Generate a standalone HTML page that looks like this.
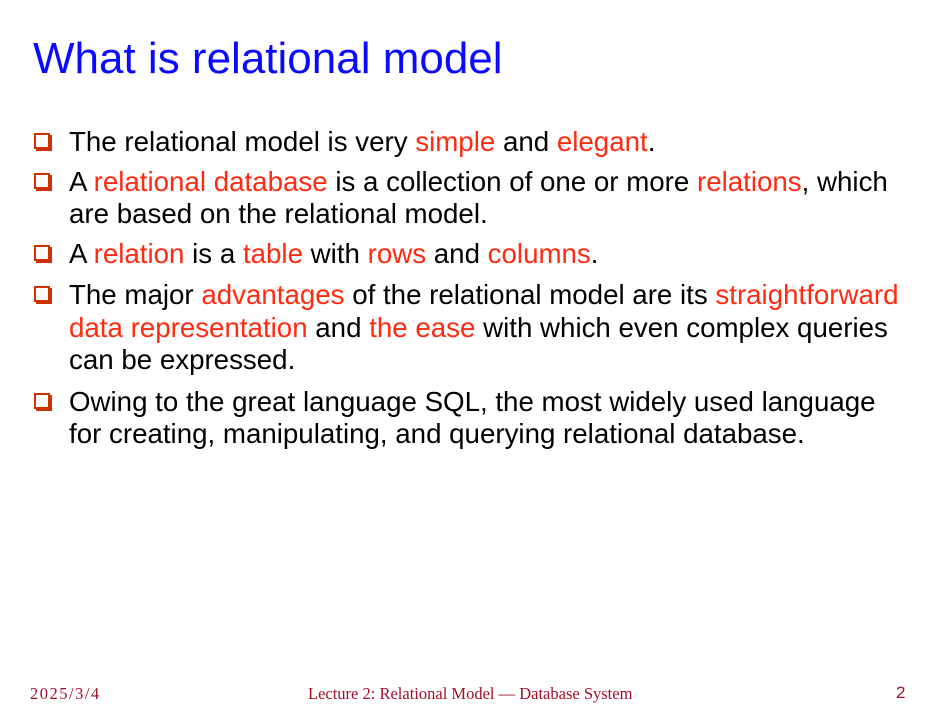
<!DOCTYPE html>
<html><head><meta charset="utf-8"><style>
body{margin:0;width:940px;height:706px;background:#fff;position:relative;overflow:hidden;font-family:"Liberation Sans",Arial,sans-serif}
.t{position:absolute;left:33px;top:33px;font-size:44px;color:#0a0aff;line-height:52px;white-space:nowrap}
.l{position:absolute;left:69px;font-size:27.7px;line-height:30px;color:#000;white-space:nowrap}
.r{color:#ff2a10}
.b{position:absolute;left:34px;width:12px;height:12px;border:2px solid #cc3300;box-shadow:2px 2px 0 #cc3300}
.f{position:absolute;top:684px;font-family:"Liberation Serif",serif;font-size:16.5px;color:#a0102a;white-space:nowrap}
</style></head><body>
<div class="t">What is relational model</div>
<div class="b" style="top:133px"></div>
<div class="l" style="top:127px">The relational model is very <span class="r">simple</span> and <span class="r">elegant</span>.</div>
<div class="b" style="top:173px"></div>
<div class="l" style="top:167px">A <span class="r">relational database</span> is a collection of one or more <span class="r">relations</span>, which</div>
<div class="l" style="top:199px">are based on the relational model.</div>
<div class="b" style="top:245px"></div>
<div class="l" style="top:239px">A <span class="r">relation</span> is a <span class="r">table</span> with <span class="r">rows</span> and <span class="r">columns</span>.</div>
<div class="b" style="top:286px"></div>
<div class="l" style="top:280px">The major <span class="r">advantages</span> of the relational model are its <span class="r">straightforward</span></div>
<div class="l" style="top:313px"><span class="r">data representation</span> and <span class="r">the ease</span> with which even complex queries</div>
<div class="l" style="top:345px">can be expressed.</div>
<div class="b" style="top:393px"></div>
<div class="l" style="top:387px">Owing to the great language SQL, the most widely used language</div>
<div class="l" style="top:419px">for creating, manipulating, and querying relational database.</div>
<div class="f" style="left:30px;letter-spacing:1.5px">2025/3/4</div>
<div class="f" style="left:308px">Lecture 2: Relational Model — Database System</div>
<div class="f" style="left:896px;font-family:'Liberation Sans',sans-serif;font-size:17px;top:683px">2</div>
</body></html>
